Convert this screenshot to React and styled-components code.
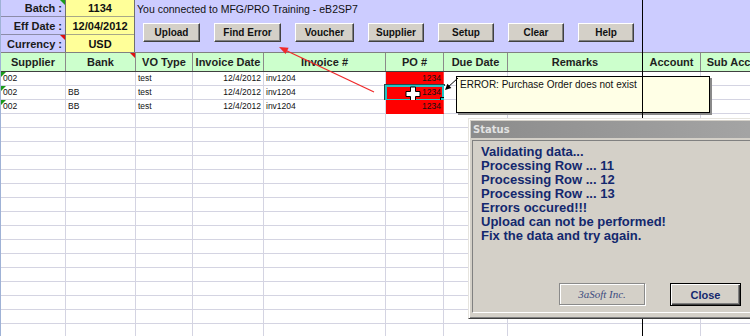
import React from "react";
import styled, { createGlobalStyle } from "styled-components";

const GlobalStyle = createGlobalStyle`
  html, body {
    margin: 0;
    padding: 0;
    background: #fff;
    overflow: hidden;
  }
  body {
    font-family: "Liberation Sans", Arial, sans-serif;
  }
`;

const COLS = "65px 70px 57px 71px 122px 58px 64px 135px 58px 80px";

const columns = [
  { title: "Supplier" },
  { title: "Bank", flag: "red" },
  { title: "VO Type" },
  { title: "Invoice Date" },
  { title: "Invoice #" },
  { title: "PO #" },
  { title: "Due Date" },
  { title: "Remarks" },
  { title: "Account" },
  { title: "Sub Account" },
];

const rows = [
  { supplier: "002", bank: "", type: "test", date: "12/4/2012", invoice: "inv1204", po: "1234" },
  { supplier: "002", bank: "BB", type: "test", date: "12/4/2012", invoice: "inv1204", po: "1234", selected: true },
  { supplier: "002", bank: "BB", type: "test", date: "12/4/2012", invoice: "inv1204", po: "1234" },
];

const buttons = [
  { label: "Upload", width: 57 },
  { label: "Find Error", width: 67 },
  { label: "Voucher", width: 59 },
  { label: "Supplier", width: 56 },
  { label: "Setup", width: 56 },
  { label: "Clear", width: 56 },
  { label: "Help", width: 56 },
];

const statusLines = [
  "Validating data...",
  "Processing Row ... 11",
  "Processing Row ... 12",
  "Processing Row ... 13",
  "Errors occured!!!",
  "Upload can not be performed!",
  "Fix the data and try again.",
];

const App = () => {
  return (
    <>
      <GlobalStyle />
      <Sheet>
        <TopArea>
          <LabelStack>
            <LabelCell>
              Batch :<Flag $color="#1a9a1a" />
            </LabelCell>
            <LabelCell>Eff Date :</LabelCell>
            <LabelCell>
              Currency :<Flag $color="#e01010" />
            </LabelCell>
          </LabelStack>
          <ValueStack>
            <ValueCell>1134</ValueCell>
            <ValueCell>12/04/2012</ValueCell>
            <ValueCell>USD</ValueCell>
          </ValueStack>
          <Toolbar>
            <InfoText>You connected to MFG/PRO Training - eB2SP7</InfoText>
            <ButtonRow>
              {buttons.map((b) => (
                <SheetButton key={b.label} $width={b.width}>
                  {b.label}
                </SheetButton>
              ))}
            </ButtonRow>
          </Toolbar>
          <TopFiller />
        </TopArea>

        <HeaderRow>
          {columns.map((c) => (
            <HeaderCell key={c.title}>
              {c.title}
              {c.flag && <Flag $color="#e01010" />}
            </HeaderCell>
          ))}
        </HeaderRow>

        {rows.map((r, i) => (
          <Row key={i}>
            <Cell>
              <LeftFlag />
              {r.supplier}
            </Cell>
            <Cell>{r.bank}</Cell>
            <Cell>{r.type}</Cell>
            <Cell $align="right">{r.date}</Cell>
            <Cell>{r.invoice}</Cell>
            <Cell $align="right" $red>
              {r.po}
              {r.selected && (
                <>
                  <Selection>
                    <FillHandle />
                  </Selection>
                  <Cursor width="16" height="16" viewBox="0 0 16 16">
                    <polygon
                      points="5.5,1 10.5,1 10.5,5.5 15,5.5 15,10.5 10.5,10.5 10.5,15 5.5,15 5.5,10.5 1,10.5 1,5.5 5.5,5.5"
                      fill="#fff"
                      stroke="#000"
                      strokeWidth="1"
                    />
                  </Cursor>
                </>
              )}
            </Cell>
            <Cell />
            <Cell />
            <Cell />
            <Cell />
          </Row>
        ))}

        {Array.from({ length: 16 }).map((_, i) => (
          <Row key={"e" + i}>
            {columns.map((c) => (
              <Cell key={c.title} />
            ))}
          </Row>
        ))}

        <Comment>ERROR: Purchase Order does not exist</Comment>
        <Connector width="20" height="24" viewBox="0 0 20 24">
          <line x1="17" y1="6" x2="6" y2="16" stroke="#000" strokeWidth="1" />
          <polygon points="4,18 10.4,16.1 6.4,11.7" fill="#000" />
        </Connector>

        <RedArrow width="110" height="60" viewBox="0 0 110 60">
          <line x1="103" y1="52" x2="14" y2="10" stroke="#f02a2a" strokeWidth="1.3" />
          <polygon points="8,7 17.6,7.7 14.6,14" fill="#f02a2a" />
        </RedArrow>

        <FreezeLine />

        <Dialog>
          <TitleBar>Status</TitleBar>
          <DialogBody>
            <Panel>
              <StatusText>
                {statusLines.map((l) => (
                  <div key={l}>{l}</div>
                ))}
              </StatusText>
              <DialogButtons>
                <BrandButton>3aSoft Inc.</BrandButton>
                <CloseButton>Close</CloseButton>
              </DialogButtons>
            </Panel>
          </DialogBody>
        </Dialog>
      </Sheet>
    </>
  );
};

const Sheet = styled.div`
  position: relative;
  width: 750px;
  height: 336px;
  overflow: hidden;
  background: #fff;
  border-left: 1px solid #9fb2d6;
  box-sizing: border-box;
`;

const TopArea = styled.div`
  display: grid;
  grid-template-columns: 64px 70px 507px 80px;
  height: 52px;
  background: #ccccff;
`;

const LabelStack = styled.div`
  display: grid;
  grid-template-rows: 17px 18px 17px;
`;

const LabelCell = styled.div`
  position: relative;
  display: flex;
  align-items: center;
  justify-content: flex-end;
  padding-right: 3px;
  font-size: 11px;
  font-weight: bold;
  color: #1a1a1a;
  border-bottom: 1px solid #8c8ca8;
  &:last-child {
    border-bottom: none;
  }
`;

const ValueStack = styled.div`
  display: grid;
  grid-template-rows: 17px 18px 17px;
  border-left: 1px solid #707070;
  border-right: 1px solid #707070;
`;

const ValueCell = styled.div`
  display: flex;
  align-items: center;
  justify-content: center;
  background: #ffff99;
  font-size: 11px;
  font-weight: bold;
  color: #111;
  border-bottom: 1px solid #a8a888;
  &:last-child {
    border-bottom: none;
  }
`;

const Toolbar = styled.div`
  display: flex;
  flex-direction: column;
  padding-left: 2px;
`;

const InfoText = styled.div`
  font-size: 10.5px;
  color: #111;
  height: 15px;
  padding-top: 3px;
  line-height: 13px;
`;

const ButtonRow = styled.div`
  display: flex;
  gap: 14px;
  padding-left: 6px;
  margin-top: 5px;
`;

const SheetButton = styled.div`
  width: ${(p) => p.$width}px;
  height: 19px;
  box-sizing: border-box;
  display: flex;
  align-items: center;
  justify-content: center;
  background: #d4d0c8;
  border: 1px solid;
  border-color: #fff #404040 #404040 #fff;
  box-shadow: inset -1px -1px 0 #808080;
  font-size: 10px;
  font-weight: bold;
  color: #111;
`;

const TopFiller = styled.div``;

const Flag = styled.span`
  position: absolute;
  top: 0;
  right: 0;
  width: 0;
  height: 0;
  border-top: 5px solid ${(p) => p.$color};
  border-left: 5px solid transparent;
`;

const LeftFlag = styled.span`
  position: absolute;
  top: 0;
  left: 0;
  width: 0;
  height: 0;
  border-top: 5px solid #1a9a1a;
  border-right: 5px solid transparent;
`;

const HeaderRow = styled.div`
  display: grid;
  grid-template-columns: ${COLS};
  width: 780px;
  height: 20px;
  box-sizing: border-box;
  background: #ccffcc;
  border-top: 1px solid #808080;
  border-bottom: 1px solid #404040;
`;

const HeaderCell = styled.div`
  position: relative;
  display: flex;
  align-items: center;
  justify-content: center;
  white-space: nowrap;
  overflow: hidden;
  font-size: 11px;
  font-weight: bold;
  color: #1e1e1e;
  border-right: 1px solid #8a8a8a;
`;

const Row = styled.div`
  display: grid;
  grid-template-columns: ${COLS};
  width: 780px;
  height: 14px;
`;

const Cell = styled.div`
  position: relative;
  box-sizing: border-box;
  padding: 0 2px;
  font-size: 8.5px;
  line-height: 13px;
  color: #111;
  white-space: nowrap;
  text-align: ${(p) => p.$align || "left"};
  background: ${(p) => (p.$red ? "#ff0000" : "#fff")};
  border-right: 1px solid ${(p) => (p.$red ? "#ff4040" : "#d4d4e2")};
  border-bottom: 1px solid ${(p) => (p.$red ? "#ff0000" : "#d4d4e2")};
`;

const Selection = styled.div`
  position: absolute;
  left: -1px;
  top: -1px;
  right: -1px;
  bottom: -2px;
  border: 2px solid #22c4c4;
  box-shadow: 0 0 0 1px #2a4a4a;
`;

const FillHandle = styled.span`
  position: absolute;
  right: -4px;
  bottom: -4px;
  width: 4px;
  height: 4px;
  background: #22c4c4;
  border: 1px solid #000;
`;

const Cursor = styled.svg`
  position: absolute;
  left: 19px;
  top: 0px;
`;

const Comment = styled.div`
  position: absolute;
  left: 455px;
  top: 76px;
  width: 254px;
  height: 37px;
  box-sizing: border-box;
  padding: 2px 3px;
  background: #ffffe6;
  border: 1px solid #000;
  box-shadow: 2px 2px 0 #8a8a8a;
  font-size: 10px;
  color: #111;
  z-index: 2;
`;

const Connector = styled.svg`
  position: absolute;
  left: 440px;
  top: 72px;
  z-index: 3;
`;

const RedArrow = styled.svg`
  position: absolute;
  left: 270px;
  top: 40px;
  z-index: 3;
`;

const FreezeLine = styled.div`
  position: absolute;
  left: 641px;
  top: 0;
  width: 1px;
  height: 336px;
  background: #000;
  z-index: 4;
`;

const Dialog = styled.div`
  position: absolute;
  left: 467px;
  top: 118px;
  width: 330px;
  height: 201px;
  box-sizing: border-box;
  display: flex;
  flex-direction: column;
  background: #d4d0c8;
  border: 1px solid;
  border-color: #e6e4de #404040 #404040 #e6e4de;
  box-shadow: inset 1px 1px 0 #fff, inset -1px -1px 0 #808080;
  padding: 2px;
  z-index: 5;
`;

const TitleBar = styled.div`
  height: 17px;
  display: flex;
  align-items: center;
  padding-left: 2px;
  background: linear-gradient(to right, #8c8c8c, #a8a8a8);
  color: #e2e2e2;
  font-family: "DejaVu Sans", sans-serif;
  font-size: 10px;
  font-weight: bold;
`;

const DialogBody = styled.div`
  flex: 1;
  display: flex;
  padding: 2px 0 3px 1px;
`;

const Panel = styled.div`
  flex: 1;
  display: flex;
  flex-direction: column;
  border: 1px solid;
  border-color: #808080 #fff #fff #808080;
`;

const StatusText = styled.div`
  padding: 4px 0 0 8px;
  font-size: 13px;
  line-height: 14px;
  font-weight: bold;
  color: #13286e;
`;

const DialogButtons = styled.div`
  margin-top: auto;
  display: flex;
  gap: 25px;
  padding: 0 0 6px 86px;
`;

const BrandButton = styled.div`
  width: 86px;
  height: 22px;
  box-sizing: border-box;
  display: flex;
  align-items: center;
  justify-content: center;
  border: 1px solid #8a8a8a;
  box-shadow: inset 1px 1px 0 #fff, 1px 1px 0 #fff;
  font-family: "Liberation Serif", "Times New Roman", serif;
  font-style: italic;
  font-size: 11px;
  color: #3c4c80;
`;

const CloseButton = styled.div`
  width: 71px;
  height: 23px;
  box-sizing: border-box;
  display: flex;
  align-items: center;
  justify-content: center;
  border: 1px solid #000;
  box-shadow: inset 1px 1px 0 #fff, inset -1px -1px 0 #404040,
    inset -2px -2px 0 #808080;
  font-size: 11px;
  font-weight: bold;
  color: #13286e;
`;

export default App;
